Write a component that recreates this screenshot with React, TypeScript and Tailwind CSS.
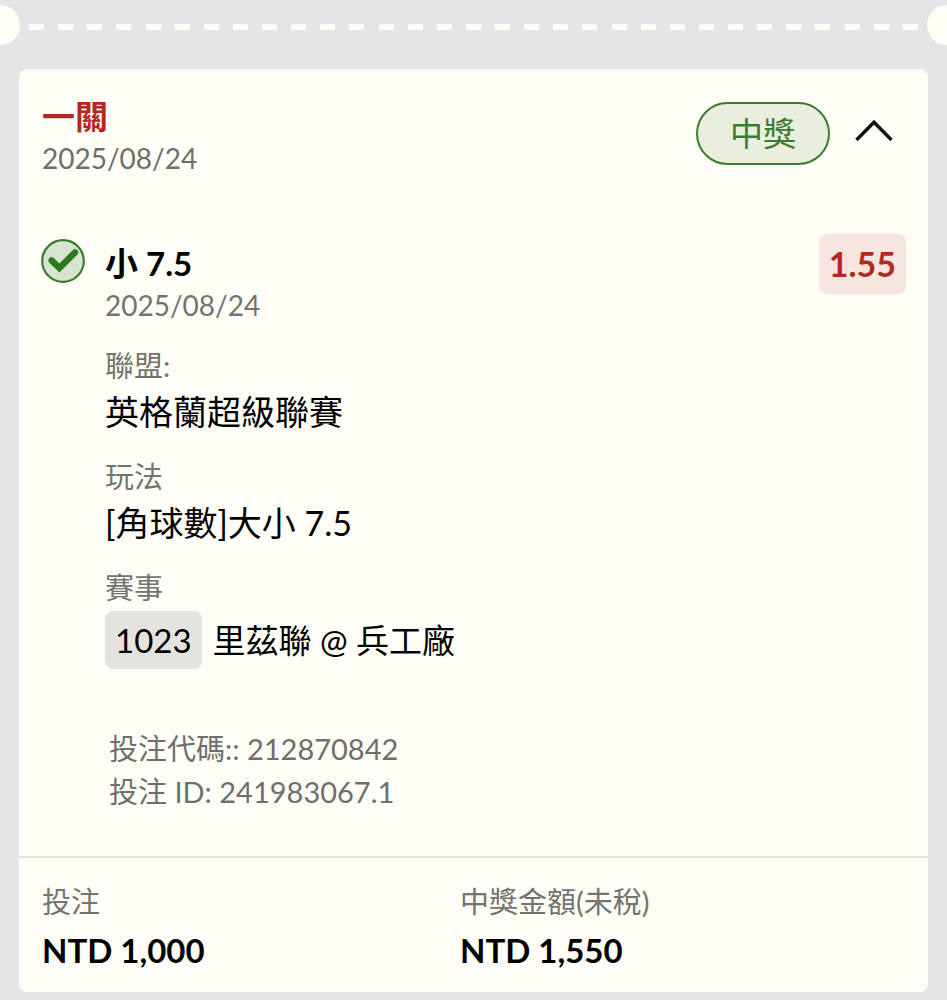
import { useState } from "react";

const bet = {
  title: "一關",
  date: "2025/08/24",
  status: "中獎",
  pick: "小 7.5",
  odds: "1.55",
  league: "英格蘭超級聯賽",
  market: "[角球數]大小 7.5",
  matchNo: "1023",
  match: "里茲聯 @ 兵工廠",
  code: "212870842",
  id: "241983067.1",
};

const totals = [
  { label: "投注", value: "NTD 1,000" },
  { label: "中獎金額(未稅)", value: "NTD 1,550" },
];

function TicketDivider() {
  return (
    <div className="flex h-10 items-center justify-between" aria-hidden>
      <div className="h-10 w-5 rounded-r-full bg-[#fffef6]" />
      <div className="flex flex-1 justify-between px-[9px] pt-1">
        {Array.from({ length: 31 }, (_, i) => (
          <span key={i} className="h-[6px] w-[15px] rounded-[1px] bg-[#fffef6]" />
        ))}
      </div>
      <div className="h-10 w-5 rounded-l-full bg-[#fffef6]" />
    </div>
  );
}

function CheckIcon() {
  return (
    <svg viewBox="0 0 44 44" className="size-11 shrink-0" fill="none" aria-hidden>
      <circle cx="22" cy="22" r="20.8" fill="#d8e3d0" stroke="#3b7d2f" strokeWidth="2.2" />
      <path d="M10.6 21.4 18.4 29 34 13.4" stroke="#2f7a20" strokeWidth="6.4" strokeLinecap="round" />
    </svg>
  );
}

function Field({ label, children }: { label: string; children: React.ReactNode }) {
  return (
    <div className="mt-[19px]">
      <dt className="text-[29px] leading-[42px] text-[#74746f]">{label}</dt>
      <dd className="text-[34px] leading-[50px] text-black">{children}</dd>
    </div>
  );
}

export default function App() {
  const [open, setOpen] = useState(true);

  return (
    <main className="min-h-screen bg-[#e4e5e7] pt-[5px] pb-2 font-['Lato','Noto_Sans_CJK_TC',sans-serif]">
      <TicketDivider />

      <section className="mx-[19px] mt-6 rounded-lg bg-[#fffef6]">
        <header className="flex items-start justify-between px-[23px] pt-[26px]">
          <div>
            <h2 className="text-[33px] leading-[42px] font-bold text-[#b3291f]">{bet.title}</h2>
            <p className="text-[28px] leading-[42px] text-[#6f6f6a]">{bet.date}</p>
          </div>
          <div className="flex items-center gap-6 pt-[7px] pr-[11px]">
            <span className="rounded-full border-2 border-[#3b7d2f] bg-[#e9eede] px-8 text-[33px] leading-[59px] text-[#3b7d2f]">
              {bet.status}
            </span>
            <button type="button" className="pb-1.5" aria-label="收合" aria-expanded={open} onClick={() => setOpen(!open)}>
              <svg viewBox="0 0 40 24" className={open ? "h-6 w-10" : "h-6 w-10 rotate-180"} fill="none">
                <path d="M2.5 21 20 3.2 37.5 21" stroke="#111" strokeWidth="3.4" />
              </svg>
            </button>
          </div>
        </header>

        {open && (
          <div className="flex items-start px-[22px] pt-[55px] pb-[43px]">
            <div className="pt-[5px]">
              <CheckIcon />
            </div>
            <div className="ml-5 flex-1 pt-2">
              <h3 className="text-[33px] leading-[42px] font-bold text-black">{bet.pick}</h3>
              <p className="text-[28px] leading-[42px] text-[#74746f]">{bet.date}</p>
              <dl>
                <Field label="聯盟:">{bet.league}</Field>
                <Field label="玩法">{bet.market}</Field>
                <Field label="賽事">
                  <span className="flex items-center gap-[11px] pt-[2px] text-[33px] leading-[58px]">
                    <span className="rounded-lg bg-[#e5e3df] px-[10px]">{bet.matchNo}</span>
                    {bet.match}
                  </span>
                </Field>
              </dl>
              <div className="mt-[58px] pl-1 text-[29px] leading-[43px] text-[#6f6f6a]">
                <p>投注代碼:: {bet.code}</p>
                <p>投注 ID: {bet.id}</p>
              </div>
            </div>
            <span className="rounded-lg bg-[#f7e5df] px-[10px] text-[34px] leading-[60px] font-bold text-[#b3291f]">
              {bet.odds}
            </span>
          </div>
        )}

        <dl className="grid grid-cols-2 border-t-2 border-[#e5e3de] pt-[23px] pr-[50px] pb-[15px] pl-[23px]">
          {totals.map((item) => (
            <div key={item.label}>
              <dt className="text-[29px] leading-[42px] text-[#74746f]">{item.label}</dt>
              <dd className="text-[33px] leading-[54px] font-bold text-black">{item.value}</dd>
            </div>
          ))}
        </dl>
      </section>
    </main>
  );
}
